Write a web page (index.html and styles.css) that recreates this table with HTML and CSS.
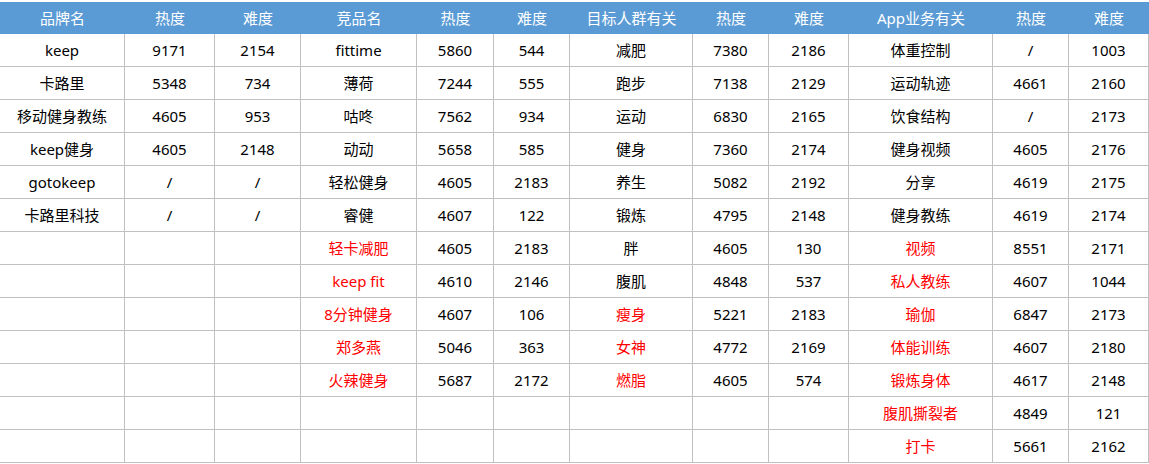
FILE: index.html
```html
<!DOCTYPE html>
<html lang="zh-CN">
<head>
<meta charset="utf-8">
<title>关键词表</title>
<link rel="stylesheet" href="styles.css">
</head>
<body>
<table class="sheet">
  <colgroup>
    <col class="c1"><col class="c2"><col class="c3"><col class="c4"><col class="c5"><col class="c6">
    <col class="c7"><col class="c8"><col class="c9"><col class="c10"><col class="c11"><col class="c12">
  </colgroup>
  <thead>
    <tr>
      <th>品牌名</th><th>热度</th><th>难度</th>
      <th>竞品名</th><th>热度</th><th>难度</th>
      <th>目标人群有关</th><th>热度</th><th>难度</th>
      <th>App业务有关</th><th>热度</th><th>难度</th>
    </tr>
  </thead>
  <tbody>
    <tr><td>keep</td><td>9171</td><td>2154</td><td>fittime</td><td>5860</td><td>544</td><td>减肥</td><td>7380</td><td>2186</td><td>体重控制</td><td>/</td><td>1003</td></tr>
    <tr><td>卡路里</td><td>5348</td><td>734</td><td>薄荷</td><td>7244</td><td>555</td><td>跑步</td><td>7138</td><td>2129</td><td>运动轨迹</td><td>4661</td><td>2160</td></tr>
    <tr><td>移动健身教练</td><td>4605</td><td>953</td><td>咕咚</td><td>7562</td><td>934</td><td>运动</td><td>6830</td><td>2165</td><td>饮食结构</td><td>/</td><td>2173</td></tr>
    <tr><td>keep健身</td><td>4605</td><td>2148</td><td>动动</td><td>5658</td><td>585</td><td>健身</td><td>7360</td><td>2174</td><td>健身视频</td><td>4605</td><td>2176</td></tr>
    <tr><td>gotokeep</td><td>/</td><td>/</td><td>轻松健身</td><td>4605</td><td>2183</td><td>养生</td><td>5082</td><td>2192</td><td>分享</td><td>4619</td><td>2175</td></tr>
    <tr><td>卡路里科技</td><td>/</td><td>/</td><td>睿健</td><td>4607</td><td>122</td><td>锻炼</td><td>4795</td><td>2148</td><td>健身教练</td><td>4619</td><td>2174</td></tr>
    <tr><td></td><td></td><td></td><td class="red">轻卡减肥</td><td>4605</td><td>2183</td><td>胖</td><td>4605</td><td>130</td><td class="red">视频</td><td>8551</td><td>2171</td></tr>
    <tr><td></td><td></td><td></td><td class="red">keep fit</td><td>4610</td><td>2146</td><td>腹肌</td><td>4848</td><td>537</td><td class="red">私人教练</td><td>4607</td><td>1044</td></tr>
    <tr><td></td><td></td><td></td><td class="red">8分钟健身</td><td>4607</td><td>106</td><td class="red">瘦身</td><td>5221</td><td>2183</td><td class="red">瑜伽</td><td>6847</td><td>2173</td></tr>
    <tr><td></td><td></td><td></td><td class="red">郑多燕</td><td>5046</td><td>363</td><td class="red">女神</td><td>4772</td><td>2169</td><td class="red">体能训练</td><td>4607</td><td>2180</td></tr>
    <tr><td></td><td></td><td></td><td class="red">火辣健身</td><td>5687</td><td>2172</td><td class="red">燃脂</td><td>4605</td><td>574</td><td class="red">锻炼身体</td><td>4617</td><td>2148</td></tr>
    <tr><td></td><td></td><td></td><td></td><td></td><td></td><td></td><td></td><td></td><td class="red">腹肌撕裂者</td><td>4849</td><td>121</td></tr>
    <tr><td></td><td></td><td></td><td></td><td></td><td></td><td></td><td></td><td></td><td class="red">打卡</td><td>5661</td><td>2162</td></tr>
  </tbody>
</table>
</body>
</html>
```

FILE: styles.css
```css
html, body {
  margin: 0;
  padding: 0;
  background: #ffffff;
}

body {
  padding-top: 2px;
  font-family: "Noto Sans", "Noto Sans CJK SC", "DejaVu Sans", sans-serif;
  font-size: 15px;
  color: #000000;
}

.sheet {
  border-collapse: separate;
  border-spacing: 0;
  table-layout: fixed;
  width: 1149px;
}

.c1 { width: 125px; }
.c2 { width: 90px; }
.c3 { width: 86px; }
.c4 { width: 116px; }
.c5 { width: 77px; }
.c6 { width: 76px; }
.c7 { width: 123px; }
.c8 { width: 76px; }
.c9 { width: 80px; }
.c10 { width: 144px; }
.c11 { width: 76px; }
.c12 { width: 80px; }

.sheet th {
  height: 32px;
  padding: 0;
  background: #5b9bd5;
  color: #ffffff;
  font-weight: normal;
  text-align: center;
  vertical-align: middle;
  white-space: nowrap;
  line-height: 32px;
}

.sheet td {
  height: 33px;
  padding: 0;
  border-right: 1px solid #c0c0c0;
  border-bottom: 1px solid #c0c0c0;
  text-align: center;
  vertical-align: middle;
  white-space: nowrap;
  line-height: 32px;
  box-sizing: border-box;
}

.sheet td.red {
  color: #ff0000;
}
```
